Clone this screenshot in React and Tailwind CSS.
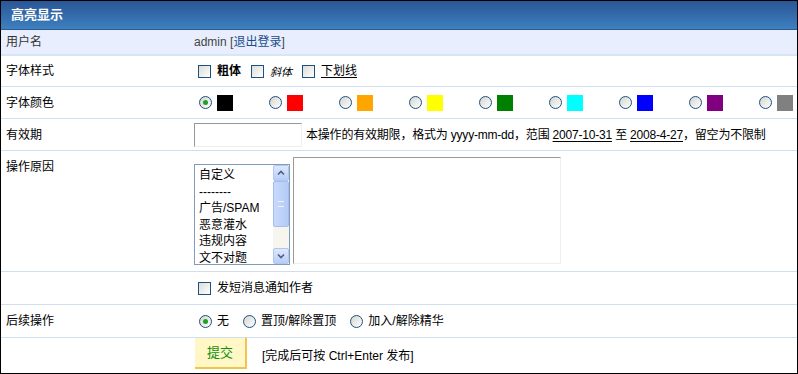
import React from 'react';

const Check = () => (
  <span className="inline-block w-[13px] h-[13px] border border-[#1c5180] bg-gradient-to-br from-[#dcdcd7] to-white shrink-0" />
);

const Radio = ({ on }) => (
  <span className="relative inline-flex items-center justify-center w-[13px] h-[13px] rounded-full border border-[#1c5180] bg-gradient-to-br from-[#d4d4cf] to-white shrink-0">
    {on && <span className="w-[5px] h-[5px] rounded-full bg-[#21a121]" />}
  </span>
);

const Arrow = ({ up }) => (
  <div className="h-[16px] rounded-[2px] bg-gradient-to-b from-[#dde8ff] to-[#b8cdf5] border border-[#b2c6ee] flex items-center justify-center">
    <svg width="8" height="6" viewBox="0 0 8 6">
      <path d={up ? 'M1 4.5 L4 1.5 L7 4.5' : 'M1 1.5 L4 4.5 L7 1.5'} fill="none" stroke="#4d6185" strokeWidth="1.6" />
    </svg>
  </div>
);

const Row = ({ label, children, className = '', top = false }) => (
  <div className={`flex border-b border-[#d1def0] ${top ? 'items-start' : 'items-center'} ${className}`}>
    <div className={`w-[193px] shrink-0 pl-[5px] ${top ? 'pt-[7px]' : ''}`}>{label}</div>
    <div className="flex-1 flex items-center">{children}</div>
  </div>
);

const colors = ['#000000', '#ff0000', '#ffa500', '#ffff00', '#008000', '#00ffff', '#0000ff', '#800080', '#808080'];
const reasons = ['自定义', '--------', '广告/SPAM', '恶意灌水', '违规内容', '文不对题'];

export default function App() {
  return (
    <div className="w-[798px] h-[374px] border border-black bg-white text-[12px] text-black overflow-hidden font-['Liberation_Sans','Noto_Sans_CJK_SC',sans-serif]">
      {/* header */}
      <div className="h-[29px] flex items-center pl-[10px] bg-gradient-to-b from-[#2a5695] to-[#3e80c0] border-b border-[#2d5b8f] text-white font-bold text-[13px]">
        高亮显示
      </div>

      <Row label={<span className="text-[#333]">用户名</span>} className="h-[26px] bg-[#e8eefd] border-b-2 border-b-[#d6e6f6]">
        <span className="text-[#444]">admin <span>[<span className="text-[#1a4e8a]">退出登录</span>]</span></span>
      </Row>

      <Row label="字体样式" className="h-[31px]">
        <div className="flex items-center pl-[4px]">
          <Check />
          <b className="ml-[6px] mr-[10px]">粗体</b>
          <Check />
          <i className="ml-[6px] mr-[10px] font-['Noto_Sans_CJK_JP',serif] text-[11px]">斜体</i>
          <Check />
          <span className="ml-[6px] underline underline-offset-2">下划线</span>
        </div>
      </Row>

      <Row label="字体颜色" className="h-[32px]">
        <div className="flex items-center pl-[5px]">
          {colors.map((c, i) => (
            <div key={c} className="flex items-center w-[70px]">
              <Radio on={i === 0} />
              <span className="ml-[5px] w-[16px] h-[16px]" style={{ backgroundColor: c }} />
            </div>
          ))}
        </div>
      </Row>

      <Row label="有效期" className="h-[32px]">
        <input className="w-[108px] h-[24px] border border-[#999] border-r-[#eee] border-b-[#eee] bg-white outline-none" />
        <span className="ml-[4px] whitespace-nowrap tracking-[-0.2px]">
          本操作的有效期限，格式为 yyyy-mm-dd，范围 <span className="underline underline-offset-2">2007-10-31</span> 至 <span className="underline underline-offset-2">2008-4-27</span>，留空为不限制
        </span>
      </Row>

      <Row label="操作原因" top className="h-[121px]">
        <div className="flex items-start pt-[6px]">
          <div className="mt-[7px] w-[96px] h-[101px] border border-[#7f9db9] flex bg-white">
            <div className="flex-1 pl-[4px] pt-[2px] leading-[16.5px]">
              {reasons.map(r => <div key={r}>{r}</div>)}
            </div>
            <div className="w-[16px] bg-[#f6f5ee] flex flex-col">
              <Arrow up />
              <div className="h-[46px] rounded-[2px] bg-gradient-to-r from-[#c8d9fb] to-[#b4cbf6] border border-[#a4bef0] flex items-center justify-center">
                <span className="w-[6px] h-[6px] border-y border-[#eef3fe]" />
              </div>
              <div className="flex-1" />
              <Arrow />
            </div>
          </div>
          <textarea className="ml-[3px] w-[268px] h-[107px] border border-[#999] border-r-[#eee] border-b-[#eee] bg-white outline-none resize-none" />
        </div>
      </Row>

      <Row label="" className="h-[33px]">
        <div className="flex items-center pl-[4px]">
          <Check />
          <span className="ml-[6px]">发短消息通知作者</span>
        </div>
      </Row>

      <Row label="后续操作" className="h-[33px]">
        <div className="flex items-center pl-[5px]">
          <Radio on />
          <span className="ml-[5px] mr-[14px]">无</span>
          <Radio />
          <span className="ml-[5px] mr-[14px]">置顶/解除置顶</span>
          <Radio />
          <span className="ml-[5px]">加入/解除精华</span>
        </div>
      </Row>

      <div className="flex items-start h-[34px]">
        <div className="w-[193px] shrink-0" />
        <button className="ml-[1px] w-[52px] h-[31px] bg-[#fff8c6] border-r-2 border-b-2 border-[#f3c44b] text-[#109010] text-[13px]">提交</button>
        <span className="ml-[15px] mt-[9px]">[完成后可按 Ctrl+Enter 发布]</span>
      </div>
    </div>
  );
}
